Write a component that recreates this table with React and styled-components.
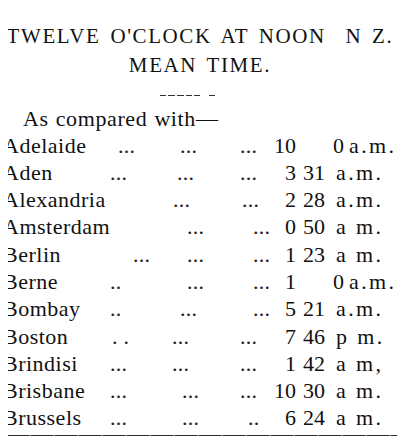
import React from 'react';
import styled, { ThemeProvider } from 'styled-components';

const theme = {
  serif: '"Liberation Serif", Tinos, "Times New Roman", serif',
  ink: '#111',
};

const Page = styled.div`
  box-sizing: border-box;
  width: 412px;
  height: 448px;
  margin: -8px;
  background: #fff;
  border-right: 2px solid #1c1c1c;
  padding-top: 2px;
  overflow: hidden;
  color: ${p => p.theme.ink};
  font-family: ${p => p.theme.serif};
`;

const TopRules = styled.div`
  display: flex;
  gap: 44px;
  padding-left: 112px;
`;

const TopRule = styled.div`
  width: ${p => p.$w}px;
  height: 2.5px;
  background: #222;
`;

const Heading = styled.h1`
  margin: 17px 0 0;
  padding-right: 10px;
  font-family: ${p => p.theme.serif};
  font-size: 21px;
  font-weight: 400;
  line-height: 29px;
  letter-spacing: 1.6px;
  word-spacing: 3px;
  text-align: center;
`;

const HeadLine = styled.div`
  white-space: nowrap;
`;

const MidDashes = styled.div`
  display: flex;
  align-items: center;
  gap: 2px;
  padding-left: 160px;
  margin-top: 15px;
  height: 2px;
`;

const Dash = styled.span`
  display: block;
  width: ${p => p.$w}px;
  height: 1.5px;
  margin-left: ${p => p.$gap || 0}px;
  background: #333;
`;

const Intro = styled.p`
  margin: 9px 0 0;
  padding-left: 23px;
  font-family: ${p => p.theme.serif};
  font-size: 22px;
  line-height: 26px;
  letter-spacing: 0.6px;
  word-spacing: 1px;
`;

const Table = styled.div`
  padding-left: 3px;
  font-family: ${p => p.theme.serif};
  font-size: 22px;
  letter-spacing: 0.5px;
`;

const Row = styled.div`
  display: grid;
  grid-template-columns: 105px 62px 65px 35px 26px auto 1fr;
  align-items: baseline;
  height: 27.3px;
  line-height: 27.3px;
  white-space: nowrap;
`;

const Name = styled.span``;

const Leader = styled.span`
  padding-left: ${p => p.$x}px;
  letter-spacing: 0.3px;
  color: #222;
`;

const Hours = styled.span`
  text-align: right;
  letter-spacing: 0;
`;

const Minutes = styled.span`
  padding-left: ${p => (p.$lone ? 37 : 7)}px;
  letter-spacing: 0;
`;

const Suffix = styled.span`
  padding-left: ${p => (p.$lone ? 5 : 11)}px;
  letter-spacing: 2.4px;
`;

const BottomRule = styled.div`
  margin: 3px 0 0 7px;
  width: 390px;
  height: 1.5px;
  background: repeating-linear-gradient(90deg, #2a2a2a 0 22px, #777 22px 24px);
`;

const rows = [
  { name: 'Adelaide', d: [[10, '...'], [10, '...'], [5, '...']], h: '10', m: '0', s: 'a.m.' },
  { name: 'Aden', d: [[2, '...'], [7, '...'], [5, '...']], h: '3', m: '31', s: 'a.m.' },
  { name: 'Alexandria', d: [null, [3, '...'], [7, '...']], h: '2', m: '28', s: 'a.m.' },
  { name: 'Amsterdam', d: [null, [17, '...'], [18, '...']], h: '0', m: '50', s: 'a m.' },
  { name: 'Berlin', d: [[25, '...'], [17, '...'], [18, '...']], h: '1', m: '23', s: 'a m.' },
  { name: 'Berne', d: [[2, '..'], [17, '...'], [18, '...']], h: '1', m: '0', s: 'a.m.' },
  { name: 'Bombay', d: [[2, '..'], [10, '...'], [18, '...']], h: '5', m: '21', s: 'a.m.' },
  { name: 'Boston', d: [[4, '. .'], [2, '...'], [5, '...']], h: '7', m: '46', s: 'p m.' },
  { name: 'Brindisi', d: [[2, '...'], [2, '...'], [5, '...']], h: '1', m: '42', s: 'a m,' },
  { name: 'Brisbane', d: [[2, '...'], [12, '...'], [5, '...']], h: '10', m: '30', s: 'a m.' },
  { name: 'Brussels', d: [[2, '...'], [12, '...'], [13, '..']], h: '6', m: '24', s: 'a m.' },
];

const midDashes = [6, 7, 7, 6, 6];

export default function App() {
  return (
    <ThemeProvider theme={theme}>
      <Page>
        <TopRules>
          <TopRule $w={66} />
          <TopRule $w={65} />
        </TopRules>
        <Heading>
          <HeadLine>TWELVE O'CLOCK AT NOON&nbsp; N Z.</HeadLine>
          <HeadLine>MEAN TIME.</HeadLine>
        </Heading>
        <MidDashes>
          {midDashes.map((w, i) => (
            <Dash key={i} $w={w} />
          ))}
          <Dash $w={6} $gap={7} />
        </MidDashes>
        <Intro>As compared with—</Intro>
        <Table>
          {rows.map(r => {
            const lone = r.m.length === 1;
            return (
              <Row key={r.name}>
                <Name>{r.name}</Name>
                {r.d.map((d, i) =>
                  d ? (
                    <Leader key={i} $x={d[0]}>
                      {d[1]}
                    </Leader>
                  ) : (
                    <Leader key={i} $x={0} />
                  )
                )}
                <Hours>{r.h}</Hours>
                <Minutes $lone={lone}>{r.m}</Minutes>
                <Suffix $lone={lone}>{r.s}</Suffix>
              </Row>
            );
          })}
        </Table>
        <BottomRule />
      </Page>
    </ThemeProvider>
  );
}
